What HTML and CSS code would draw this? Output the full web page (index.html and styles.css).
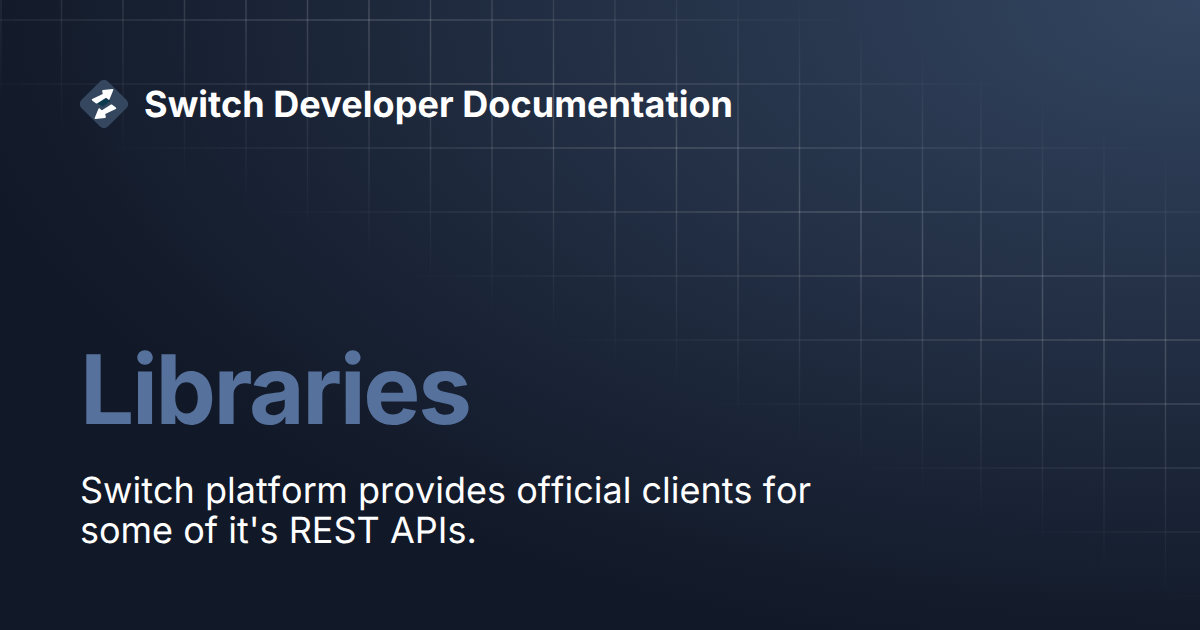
FILE: index.html
```html
<!DOCTYPE html>
<html lang="en">
<head>
<meta charset="utf-8">
<title>Libraries</title>
<link rel="stylesheet" href="styles.css">
</head>
<body>
<main class="card">
  <svg class="grid" width="1200" height="630" viewBox="0 0 1200 630" aria-hidden="true">
    <g class="grid-v">
      <line x1="1" y1="0" x2="1" y2="630"/><line x1="61.5" y1="0" x2="61.5" y2="630"/><line x1="123" y1="0" x2="123" y2="630"/><line x1="184.5" y1="0" x2="184.5" y2="630"/><line x1="246" y1="0" x2="246" y2="630"/><line x1="307.5" y1="0" x2="307.5" y2="630"/><line x1="369" y1="0" x2="369" y2="630"/><line x1="430.5" y1="0" x2="430.5" y2="630"/><line x1="492" y1="0" x2="492" y2="630"/><line x1="553.5" y1="0" x2="553.5" y2="630"/><line x1="615" y1="0" x2="615" y2="630"/><line x1="676.5" y1="0" x2="676.5" y2="630"/><line x1="738" y1="0" x2="738" y2="630"/><line x1="799.5" y1="0" x2="799.5" y2="630"/><line x1="861" y1="0" x2="861" y2="630"/><line x1="922.5" y1="0" x2="922.5" y2="630"/><line x1="981" y1="0" x2="981" y2="630"/><line x1="1042.5" y1="0" x2="1042.5" y2="630"/><line x1="1104" y1="0" x2="1104" y2="630"/><line x1="1165.5" y1="0" x2="1165.5" y2="630"/>
    </g>
    <g class="grid-h">
      <line x1="0" y1="20" x2="1200" y2="20"/><line x1="0" y1="84" x2="1200" y2="84"/><line x1="0" y1="148" x2="1200" y2="148"/><line x1="0" y1="212" x2="1200" y2="212"/><line x1="0" y1="276" x2="1200" y2="276"/><line x1="0" y1="340" x2="1200" y2="340"/><line x1="0" y1="404" x2="1200" y2="404"/><line x1="0" y1="468" x2="1200" y2="468"/><line x1="0" y1="532" x2="1200" y2="532"/><line x1="0" y1="596" x2="1200" y2="596"/>
    </g>
  </svg>
  <header class="brand">
    <svg class="logo" width="48" height="48" viewBox="0 0 48 48" aria-hidden="true">
      <rect class="logo-bg" x="5.2" y="5.2" width="37.6" height="37.6" rx="6" transform="rotate(45 24 24)"/>
      <path class="logo-mid" d="M16.7 23.3 L25 18.3 L31 20.7 L22.7 26.5 Z"/>
      <path class="logo-arrow" d="M12.6 19.8 L23.6 14.4 L23 10.8 L32.6 9.8 L28.8 19 L26.4 16.6 L16.6 22.8 Z"/>
      <path class="logo-arrow" d="M35.4 28.2 L24.4 33.6 L25 37.2 L15.4 38.2 L19.2 29 L21.6 31.4 L31.4 25.2 Z"/>
    </svg>
    <span class="brand-name">Switch Developer Documentation</span>
  </header>
  <div class="copy">
    <h1 class="title">Libraries</h1>
    <p class="desc">Switch platform provides official clients for some of it's REST APIs.</p>
  </div>
</main>
</body>
</html>
```

FILE: styles.css
```css
* { box-sizing: border-box; }
html, body { margin: 0; padding: 0; }
body { width: 1200px; height: 630px; overflow: hidden; background: #111827; }
.card {
  position: relative;
  width: 1200px;
  height: 630px;
  padding: 80px;
  display: flex;
  flex-direction: column;
  justify-content: space-between;
  font-family: Inter, "Liberation Sans", sans-serif;
  color: #fff;
  text-rendering: geometricPrecision;
  background: radial-gradient(ellipse at top right, #334560 0%, #111827 75%);
  overflow: hidden;
}
.grid {
  position: absolute;
  top: 0;
  left: 0;
  -webkit-mask-image: linear-gradient(203deg, transparent 150px, #000 340px, transparent 570px);
  mask-image: linear-gradient(203deg, transparent 150px, #000 340px, transparent 570px);
}
.grid-v line { stroke: rgba(255, 255, 255, 0.17); stroke-width: 1.5; }
.grid-h line { stroke: rgba(255, 255, 255, 0.13); stroke-width: 2; }
.brand {
  position: relative;
  display: flex;
  align-items: center;
  gap: 16px;
  height: 48px;
}
.logo { flex: none; display: block; }
.logo-bg { fill: #34475f; }
.logo-mid { fill: #0e3a4e; }
.logo-arrow { fill: #fff; stroke: #fff; stroke-width: 1.6; stroke-linejoin: round; }
.brand-name { font-size: 36px; font-weight: 700; line-height: 48px; letter-spacing: 0.06px; }
.copy { position: relative; }
.title {
  margin: 0 0 32px;
  font-size: 96px;
  font-weight: 700;
  line-height: 1;
  letter-spacing: -0.025em;
  color: #56719c;
}
.desc {
  margin: 0;
  width: 760px;
  font-size: 36px;
  font-weight: 400;
  font-kerning: none;
  line-height: 40px;
  color: #fff;
}
```
